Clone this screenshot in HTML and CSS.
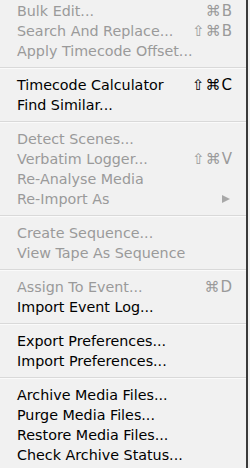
FILE: index.html
```html
<!DOCTYPE html>
<html lang="en">
<head>
    <meta charset="UTF-8">
    <title>Clip Menu</title>
    <link rel="stylesheet" href="styles.css">
</head>
<body>
<div class="menu">
    <ul class="menu-group">
        <li class="menu-item disabled"><span class="label">Bulk Edit...</span><span class="shortcut">⌘B</span></li>
        <li class="menu-item disabled"><span class="label">Search And Replace...</span><span class="shortcut">⇧⌘B</span></li>
        <li class="menu-item disabled"><span class="label">Apply Timecode Offset...</span></li>
    </ul>
    <div class="separator"></div>
    <ul class="menu-group">
        <li class="menu-item"><span class="label">Timecode Calculator</span><span class="shortcut">⇧⌘C</span></li>
        <li class="menu-item"><span class="label">Find Similar...</span></li>
    </ul>
    <div class="separator"></div>
    <ul class="menu-group">
        <li class="menu-item disabled"><span class="label">Detect Scenes...</span></li>
        <li class="menu-item disabled"><span class="label">Verbatim Logger...</span><span class="shortcut">⇧⌘V</span></li>
        <li class="menu-item disabled"><span class="label">Re-Analyse Media</span></li>
        <li class="menu-item disabled"><span class="label">Re-Import As</span><span class="submenu-arrow"></span></li>
    </ul>
    <div class="separator"></div>
    <ul class="menu-group">
        <li class="menu-item disabled"><span class="label">Create Sequence...</span></li>
        <li class="menu-item disabled"><span class="label">View Tape As Sequence</span></li>
    </ul>
    <div class="separator"></div>
    <ul class="menu-group">
        <li class="menu-item disabled"><span class="label">Assign To Event...</span><span class="shortcut">⌘D</span></li>
        <li class="menu-item"><span class="label">Import Event Log...</span></li>
    </ul>
    <div class="separator"></div>
    <ul class="menu-group">
        <li class="menu-item"><span class="label">Export Preferences...</span></li>
        <li class="menu-item"><span class="label">Import Preferences...</span></li>
    </ul>
    <div class="separator"></div>
    <ul class="menu-group">
        <li class="menu-item"><span class="label">Archive Media Files...</span></li>
        <li class="menu-item"><span class="label">Purge Media Files...</span></li>
        <li class="menu-item"><span class="label">Restore Media Files...</span></li>
        <li class="menu-item"><span class="label">Check Archive Status...</span></li>
    </ul>
</div>
</body>
</html>
```

FILE: styles.css
```css
body {
    margin: 0;
    background-color: #f1f1f1;
    font-family: "DejaVu Sans", sans-serif;
    font-size: 14.3px;
}
.menu {
    width: 248px;
    height: 468px;
    box-sizing: border-box;
    padding-top: 1px;
    background-color: #f1f1f1;
    border-right: 2px solid #3a3a3a;
}
.menu-group {
    list-style: none;
    margin: 0;
    padding: 0;
}
.menu-item {
    display: flex;
    align-items: center;
    height: 20px;
    padding: 0 14px 0 17px;
    color: #000;
}
.menu-item.disabled {
    color: #9a9a9a;
}
.label {
    flex: 1;
    white-space: nowrap;
}
.shortcut {
    white-space: nowrap;
    font-size: 15px;
    letter-spacing: 1px;
    margin-right: -1px;
}
.submenu-arrow {
    width: 0;
    height: 0;
    margin-right: 2px;
    border-top: 4px solid transparent;
    border-bottom: 4px solid transparent;
    border-left: 8px solid #a8a8a8;
}
.separator {
    height: 1px;
    margin: 6px 0;
    background-color: #d9d9d9;
    border-bottom: 1px solid #fafafa;
}
```
